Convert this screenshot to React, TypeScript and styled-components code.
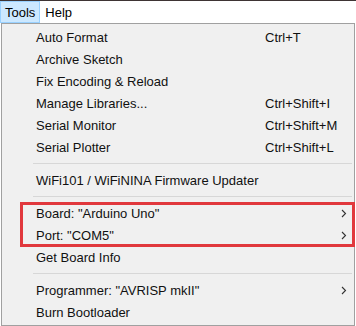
import styled, { createGlobalStyle } from "styled-components";

const GlobalStyle = createGlobalStyle`
  html, body {
    margin: 0;
    padding: 0;
    background: #ffffff;
  }
  body {
    font-family: "Liberation Sans", Arial, sans-serif;
    font-size: 13px;
    color: #000;
  }
`;

const Window = styled.div`
  width: 356px;
  height: 326px;
  overflow: hidden;
  background: #ffffff;
`;

const MenuBar = styled.div`
  display: flex;
  height: 22px;
  border-top: 1px solid #3e3434;
  background: #ffffff;
`;

const BarItem = styled.div<{ $active?: boolean }>`
  display: flex;
  align-items: center;
  padding: 0 4px 0 4px;
  border: 1px solid ${(p) => (p.$active ? "#99d1ff" : "transparent")};
  background: ${(p) => (p.$active ? "#cce8ff" : "transparent")};
`;

const Panel = styled.div`
  margin-left: 1px;
  width: 352px;
  border: 1px solid #a0a0a0;
  background: #f0f0f0;
  padding: 2px 0;
`;

const Row = styled.div`
  display: flex;
  align-items: center;
  height: 22px;
  padding-left: 34px;
  padding-right: 6px;
`;

const Label = styled.span`
  flex: 1;
  white-space: nowrap;
  color: #111;
`;

const Shortcut = styled.span`
  width: 83px;
  white-space: nowrap;
  color: #111;
`;

const Arrow = styled.svg`
  width: 6px;
  height: 9px;
  margin-right: 1px;
`;

const Separator = styled.div`
  height: 11px;
  display: flex;
  align-items: center;
  padding-left: 31px;
  padding-right: 2px;
  &::after {
    content: "";
    flex: 1;
    height: 1px;
    background: #d7d7d7;
  }
`;

const Highlight = styled.div`
  position: relative;
  &::after {
    content: "";
    position: absolute;
    left: 18px;
    right: -1px;
    top: 0px;
    bottom: -1px;
    border: 3px solid #e1383d;
    pointer-events: none;
  }
`;

type Item = { label: string; shortcut?: string; sub?: boolean };

function MenuRow({ label, shortcut, sub }: Item) {
  return (
    <Row>
      <Label>{label}</Label>
      {shortcut && <Shortcut>{shortcut}</Shortcut>}
      {sub && (
        <Arrow viewBox="0 0 6 9">
          <path d="M1 1 L4.5 4.5 L1 8" fill="none" stroke="#333" strokeWidth="1.1" />
        </Arrow>
      )}
    </Row>
  );
}

const topItems: Item[] = [
  { label: "Auto Format", shortcut: "Ctrl+T" },
  { label: "Archive Sketch" },
  { label: "Fix Encoding & Reload" },
  { label: "Manage Libraries...", shortcut: "Ctrl+Shift+I" },
  { label: "Serial Monitor", shortcut: "Ctrl+Shift+M" },
  { label: "Serial Plotter", shortcut: "Ctrl+Shift+L" },
];

export default function App() {
  return (
    <Window>
      <GlobalStyle />
      <MenuBar>
        <BarItem $active>Tools</BarItem>
        <BarItem>Help</BarItem>
      </MenuBar>
      <Panel>
        {topItems.map((it) => (
          <MenuRow key={it.label} {...it} />
        ))}
        <Separator />
        <MenuRow label="WiFi101 / WiFiNINA Firmware Updater" />
        <Separator />
        <Highlight>
          <MenuRow label={'Board: "Arduino Uno"'} sub />
          <MenuRow label={'Port: "COM5"'} sub />
        </Highlight>
        <MenuRow label="Get Board Info" />
        <Separator />
        <MenuRow label={'Programmer: "AVRISP mkII"'} sub />
        <MenuRow label="Burn Bootloader" />
      </Panel>
    </Window>
  );
}
